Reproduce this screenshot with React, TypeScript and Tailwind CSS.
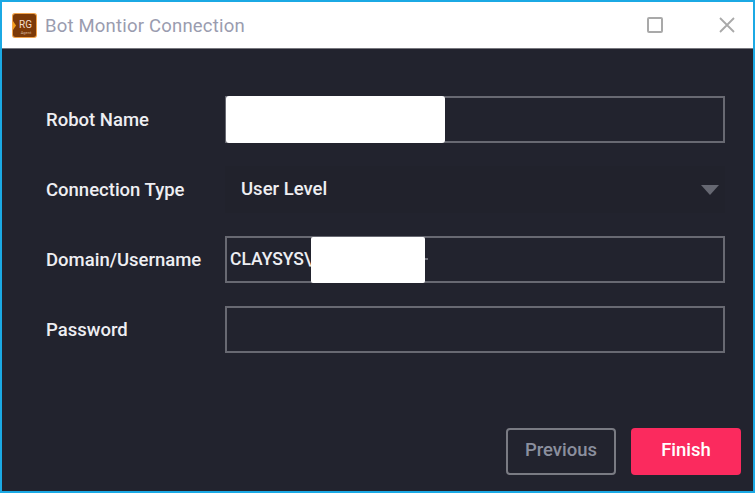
export default function App() {
  const labelClass = "w-[179px] shrink-0 pt-[2px] text-[18.5px] font-medium text-[#eeeef2]";
  const fieldClass = "flex h-[47px] w-[500px] items-center border-2 border-[#686972] text-[18.5px] font-medium text-[#eeeef2]";
  return (
    <div className="flex h-[493px] w-[755px] flex-col overflow-hidden border-2 border-[#1ba9e4] font-['Roboto',sans-serif]">
      <div className="flex h-[46px] shrink-0 items-center bg-white">
        <svg width="25" height="25" viewBox="0 0 25 25" className="ml-[10px]">
          <rect x="0" y="0" width="25" height="25" rx="3" fill="#f0a24a" />
          <rect x="1" y="1" width="23" height="23" rx="2.5" fill="#7c3a08" />
          <path d="M1 8l3 4.5-3 4.5z" fill="#f7a11a" />
          <text x="13.5" y="15" textAnchor="middle" fontSize="10" fontFamily="Roboto, sans-serif" fill="#f2dccb">RG</text>
          <text x="14" y="21" textAnchor="middle" fontSize="4" fontFamily="Roboto, sans-serif" fill="#d8b89c">Agent</text>
        </svg>
        <span className="ml-[8px] pt-[3px] text-[18.5px] tracking-[0.2px] text-[#9a9caf]">Bot Montior Connection</span>
        <div className="ml-auto mr-[16px] flex items-center gap-[54px]">
          <span className="h-[16px] w-[16px] rounded-[2px] border-2 border-[#a9a9a9]" />
          <svg width="20" height="20" viewBox="0 0 20 20" stroke="#a9a9a9" strokeWidth="1.8" fill="none">
            <path d="M3 3l14 14M17 3L3 17" />
          </svg>
        </div>
      </div>
      <div className="h-[1px] shrink-0 bg-[#77777e]" />
      <div className="flex flex-1 flex-col bg-[#22232e] pl-[44px] pr-[28px] pt-[47px]">
        <div className="flex flex-col gap-[23px]">
          <div className="flex items-center">
            <span className={labelClass}>Robot Name</span>
            <div className={`${fieldClass} relative`}>
              <div className="absolute -left-[1px] -top-[2px] h-[47px] w-[219px] rounded-[3px] bg-white" />
            </div>
          </div>
          <div className="flex items-center">
            <span className={labelClass}>Connection Type</span>
            <div className="flex h-[47px] w-[500px] items-center justify-between bg-[#21222c] pl-[16px] pr-[6px] text-[18.5px] font-medium text-[#eeeef2]">
              <span>User Level</span>
              <svg width="18" height="10" viewBox="0 0 18 10"><path d="M0 0h18l-9 10z" fill="#666872" /></svg>
            </div>
          </div>
          <div className="flex items-center">
            <span className={labelClass}>Domain/Username</span>
            <div className={`${fieldClass} relative pl-[3px]`}>
              <span className="text-[17.5px] font-medium">CLAYSYS\</span>
              <div className="absolute left-[84px] -top-[1px] h-[46px] w-[114px] rounded-[2px] bg-white" />
              <div className="absolute left-[198px] top-[20px] h-[2px] w-[3px] bg-[#6e6f78]" />
            </div>
          </div>
          <div className="flex items-center">
            <span className={labelClass}>Password</span>
            <div className={fieldClass} />
          </div>
        </div>
        <div className="mr-[-16px] mt-[75px] flex justify-end gap-[15px]">
          <button className="h-[47px] w-[110px] rounded-[4px] border-2 border-[#7a7b83] pb-[1px] text-[18.5px] font-medium text-[#8b8f9e]">Previous</button>
          <button className="h-[47px] w-[110px] rounded-[4px] bg-[#fb2a5e] pb-[1px] text-[18.5px] font-medium text-[#fff]">Finish</button>
        </div>
      </div>
    </div>
  );
}
